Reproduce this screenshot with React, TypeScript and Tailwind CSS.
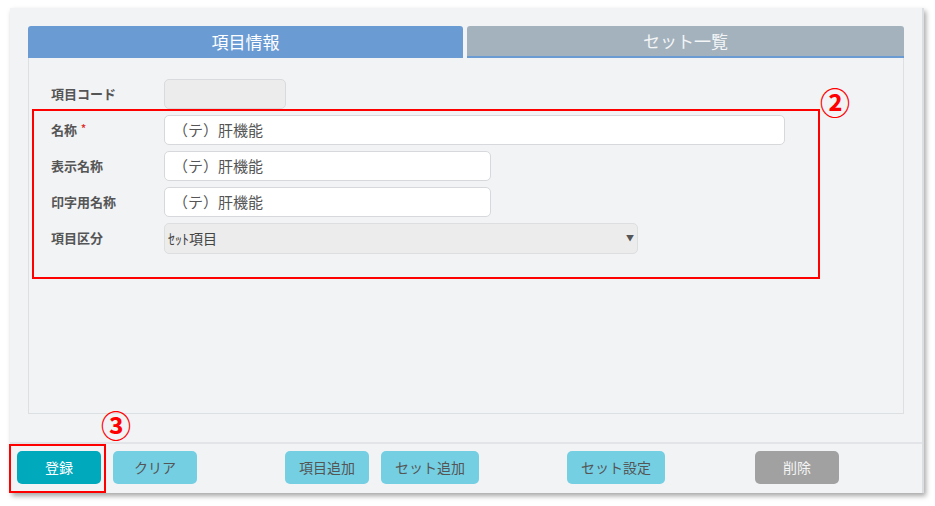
import { ReactNode } from "react";

const font = { fontFamily: '"Noto Sans CJK JP", "Noto Sans", sans-serif' };

function Row({ label, required, children }: { label: string; required?: boolean; children: ReactNode }) {
  return (
    <div className="flex items-center h-[30px]">
      <div className="w-[113px] shrink-0 text-[13px] font-bold text-[#555]">
        {label}
        {required && <span className="ml-[4px] text-[10px] text-[#e03030] align-top">*</span>}
      </div>
      {children}
    </div>
  );
}

function TextInput({ width, value }: { width: string; value: string }) {
  return (
    <div
      className={`${width} h-[30px] rounded-[5px] border border-[#d6d8db] bg-white pl-[8px] flex items-center text-[15px] text-[#555]`}
    >
      {value}
    </div>
  );
}

function Btn({ children, tone }: { children: ReactNode; tone: "main" | "sub" | "off" }) {
  const cls =
    tone === "main"
      ? "bg-[#00a9bc] text-white"
      : tone === "off"
        ? "bg-[#a1a1a1] text-[#f4f4f4]"
        : "bg-[#74cfe3] text-[#555]";
  return (
    <button className={`${cls} h-[33px] rounded-[5px] px-[14px] min-w-[84px] text-[14px] flex items-center justify-center`}>
      {children}
    </button>
  );
}

export default function App() {
  return (
    <div className="w-[935px] h-[506px] bg-white relative overflow-hidden" style={font}>
      <div className="ml-[10px] pt-[8px]">
        <div className="w-[914px] h-[485px] bg-[#f2f3f5] border-r-[2px] border-[#dcdfe2] shadow-[2px_3px_5px_rgba(0,0,0,0.35)] flex flex-col">
          {/* tabs */}
          <div className="px-[18px] pt-[18px]">
            <div className="flex gap-[4px]">
              <div className="w-[435px] h-[32px] bg-[#6b9bd3] rounded-t-[3px] flex items-center justify-center text-[17px] text-white">
                項目情報
              </div>
              <div className="w-[437px] h-[32px] bg-[#a3b2bd] rounded-t-[3px] border-b-[2px] border-[#6b9bd3] flex items-center justify-center text-[17px] text-[#f3f5f7]">
                セット一覧
              </div>
            </div>
            <div className="h-[356px] border border-t-0 border-[#dde0e3] pl-[22px] pt-[21px] flex flex-col gap-[6px]">
              <Row label="項目コード">
                <div className="w-[122px] h-[30px] rounded-[5px] border border-[#d8dadd] bg-[#ececec]" />
              </Row>
              <Row label="名称" required>
                <TextInput width="w-[621px]" value="（テ）肝機能" />
              </Row>
              <Row label="表示名称">
                <TextInput width="w-[327px]" value="（テ）肝機能" />
              </Row>
              <Row label="印字用名称">
                <TextInput width="w-[327px]" value="（テ）肝機能" />
              </Row>
              <Row label="項目区分">
                <div className="w-[474px] h-[31px] rounded-[5px] border border-[#dcdee0] bg-[#ececec] pl-[3px] pr-[3px] flex items-center justify-between text-[14px] text-[#444]">
                  <span>ｾｯﾄ項目</span>
                  <span className="text-[8px] text-[#555]">▼</span>
                </div>
              </Row>
            </div>
          </div>
          {/* footer */}
          <div className="mt-[28px] border-t-[2px] border-[#e2e4e7] pt-[7px] pl-[7px] flex">
            <Btn tone="main">登録</Btn>
            <div className="ml-[12px]">
              <Btn tone="sub">クリア</Btn>
            </div>
            <div className="ml-[88px]">
              <Btn tone="sub">項目追加</Btn>
            </div>
            <div className="ml-[12px]">
              <Btn tone="sub">セット追加</Btn>
            </div>
            <div className="ml-[88px]">
              <Btn tone="sub">セット設定</Btn>
            </div>
            <div className="ml-[90px]">
              <Btn tone="off">削除</Btn>
            </div>
          </div>
        </div>
      </div>

      {/* annotations */}
      <div className="absolute left-[32px] top-[109px] w-[788px] h-[170px] border-[2px] border-[#ff0000]" />
      <div className="absolute left-[820px] top-[86px] text-[30px] font-bold leading-none text-[#ff0000]">②</div>
      <div className="absolute left-[9px] top-[444px] w-[97px] h-[49px] border-[2px] border-[#ff0000]" />
      <div className="absolute left-[101px] top-[409px] text-[30px] font-bold leading-none text-[#ff0000]">③</div>
    </div>
  );
}
